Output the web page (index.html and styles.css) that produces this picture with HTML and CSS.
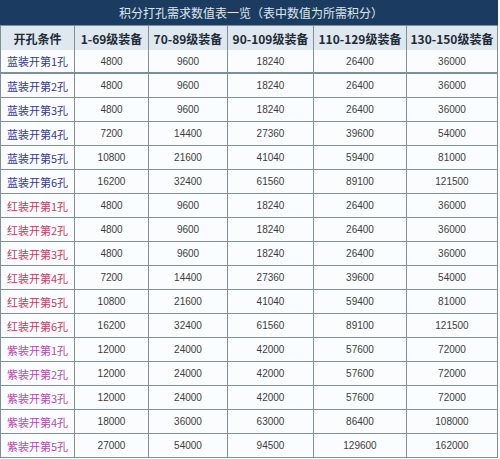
FILE: index.html
```html
<!DOCTYPE html>
<html lang="zh">
<head>
<meta charset="utf-8">
<link rel="stylesheet" href="styles.css">
</head>
<body>
<div class="wrap">
  <div class="title">积分打孔需求数值表一览（表中数值为所需积分）</div>
  <div class="sheet">
    <div class="hd">开孔条件</div><div class="hd">1-69级装备</div><div class="hd">70-89级装备</div><div class="hd">90-109级装备</div><div class="hd">110-129级装备</div><div class="hd">130-150级装备</div>

    <div class="nm blue first">蓝装开第1孔</div><div class="v first">4800</div><div class="v first">9600</div><div class="v first">18240</div><div class="v first">26400</div><div class="v first">36000</div>
    <div class="nm blue">蓝装开第2孔</div><div class="v">4800</div><div class="v">9600</div><div class="v">18240</div><div class="v">26400</div><div class="v">36000</div>
    <div class="nm blue">蓝装开第3孔</div><div class="v">4800</div><div class="v">9600</div><div class="v">18240</div><div class="v">26400</div><div class="v">36000</div>
    <div class="nm blue">蓝装开第4孔</div><div class="v">7200</div><div class="v">14400</div><div class="v">27360</div><div class="v">39600</div><div class="v">54000</div>
    <div class="nm blue">蓝装开第5孔</div><div class="v">10800</div><div class="v">21600</div><div class="v">41040</div><div class="v">59400</div><div class="v">81000</div>
    <div class="nm blue">蓝装开第6孔</div><div class="v">16200</div><div class="v">32400</div><div class="v">61560</div><div class="v">89100</div><div class="v">121500</div>

    <div class="nm red">红装开第1孔</div><div class="v">4800</div><div class="v">9600</div><div class="v">18240</div><div class="v">26400</div><div class="v">36000</div>
    <div class="nm red">红装开第2孔</div><div class="v">4800</div><div class="v">9600</div><div class="v">18240</div><div class="v">26400</div><div class="v">36000</div>
    <div class="nm red">红装开第3孔</div><div class="v">4800</div><div class="v">9600</div><div class="v">18240</div><div class="v">26400</div><div class="v">36000</div>
    <div class="nm red">红装开第4孔</div><div class="v">7200</div><div class="v">14400</div><div class="v">27360</div><div class="v">39600</div><div class="v">54000</div>
    <div class="nm red">红装开第5孔</div><div class="v">10800</div><div class="v">21600</div><div class="v">41040</div><div class="v">59400</div><div class="v">81000</div>
    <div class="nm red">红装开第6孔</div><div class="v">16200</div><div class="v">32400</div><div class="v">61560</div><div class="v">89100</div><div class="v">121500</div>

    <div class="nm purple">紫装开第1孔</div><div class="v">12000</div><div class="v">24000</div><div class="v">42000</div><div class="v">57600</div><div class="v">72000</div>
    <div class="nm purple">紫装开第2孔</div><div class="v">12000</div><div class="v">24000</div><div class="v">42000</div><div class="v">57600</div><div class="v">72000</div>
    <div class="nm purple">紫装开第3孔</div><div class="v">12000</div><div class="v">24000</div><div class="v">42000</div><div class="v">57600</div><div class="v">72000</div>
    <div class="nm purple">紫装开第4孔</div><div class="v">18000</div><div class="v">36000</div><div class="v">63000</div><div class="v">86400</div><div class="v">108000</div>
    <div class="nm purple">紫装开第5孔</div><div class="v">27000</div><div class="v">54000</div><div class="v">94500</div><div class="v">129600</div><div class="v">162000</div>
  </div>
</div>
</body>
</html>
```

FILE: styles.css
```css
html, body {
  margin: 0;
  padding: 0;
  background: #ffffff;
}

.wrap {
  width: 498px;
  font-family: "Noto Sans CJK SC", "Liberation Sans", sans-serif;
}

.title {
  height: 25px;
  background: #1c3b60;
  color: #dce7f0;
  font-size: 12px;
  line-height: 25px;
  text-align: center;
  padding-left: 4px;
  box-sizing: border-box;
}

.sheet {
  display: grid;
  grid-template-columns: 73px 73px 78px 85px 92px 90px;
  grid-auto-rows: 23px;
  gap: 1px;
  padding: 1px;
  background: #7f8e98;
}

.sheet > div {
  display: flex;
  align-items: center;
  background: #fbfcfd;
  overflow: hidden;
  white-space: nowrap;
}

.hd {
  height: 24px;
  justify-content: center;
  background: #dfe8ef !important;
  color: #1e2a36;
  font-size: 12px;
  font-weight: 700;
}

.first {
  height: 22px;
}

.nm {
  padding-left: 6px;
  font-size: 11px;
}

.blue { color: #34398a; }
.red { color: #c23c5e; }
.purple { color: #b04cae; }

.v {
  justify-content: center;
  font-family: "Liberation Sans", sans-serif;
  font-size: 10px;
  color: #3c3c3c;
}
```
